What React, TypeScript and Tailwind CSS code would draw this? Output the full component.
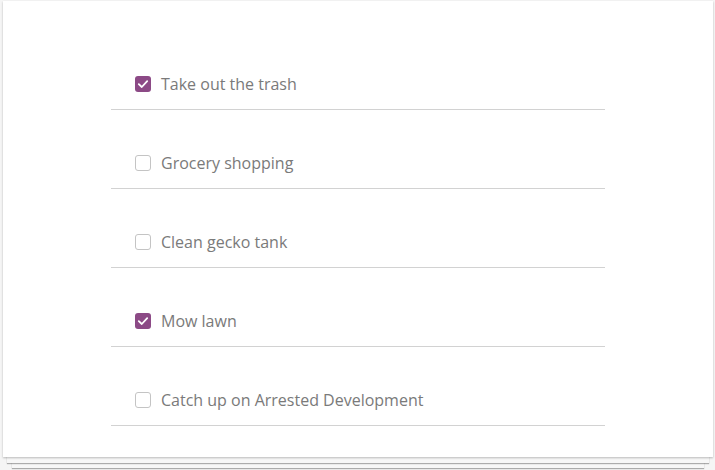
import React, { useState } from 'react';

interface Todo {
  id: number;
  title: string;
  done: boolean;
}

const initialTodos: Todo[] = [
  { id: 1, title: 'Take out the trash', done: true },
  { id: 2, title: 'Grocery shopping', done: false },
  { id: 3, title: 'Clean gecko tank', done: false },
  { id: 4, title: 'Mow lawn', done: true },
  { id: 5, title: 'Catch up on Arrested Development', done: false },
];

const App: React.FC = () => {
  const [todos, setTodos] = useState<Todo[]>(initialTodos);

  const toggle = (id: number) => {
    setTodos(todos.map((t) => (t.id === id ? { ...t, done: !t.done } : t)));
  };

  return (
    <div className="min-h-[470px] bg-[#f5f5f5] pt-px" style={{ fontFamily: '"Open Sans", "Noto Sans", sans-serif' }}>
      <div className="ml-[3px] w-[710px] bg-white pt-[30px] pb-[31px] shadow-[0_1px_2px_rgba(0,0,0,0.25),0_10px_0_-4px_#f7f7f7,0_11px_1px_-4px_rgba(0,0,0,0.3),0_20px_0_-9px_#f7f7f7,0_21px_1px_-9px_rgba(0,0,0,0.3)]">
        <ul className="mx-auto w-[494px]">
          {todos.map((todo) => (
            <li
              key={todo.id}
              className="flex h-[79px] items-center border-b border-[#d2d2d2] pt-[28px] pl-[24px]"
            >
              <button
                type="button"
                onClick={() => toggle(todo.id)}
                className={`flex h-4 w-4 items-center justify-center rounded-[3px] ${
                  todo.done ? 'bg-[#8c4a86]' : 'border border-[#c4c4c4] bg-white'
                }`}
              >
                {todo.done && (
                  <svg viewBox="0 0 16 16" className="h-4 w-4">
                    <path d="M3.8 8.2 L6.8 11 L12.2 5.2" fill="none" stroke="white" strokeWidth="1.8" strokeLinecap="round" strokeLinejoin="round" />
                  </svg>
                )}
              </button>
              <span className="ml-[10px] text-[16px] leading-6 text-[#7a7a7a]">{todo.title}</span>
            </li>
          ))}
        </ul>
      </div>
    </div>
  );
};

export default App;
